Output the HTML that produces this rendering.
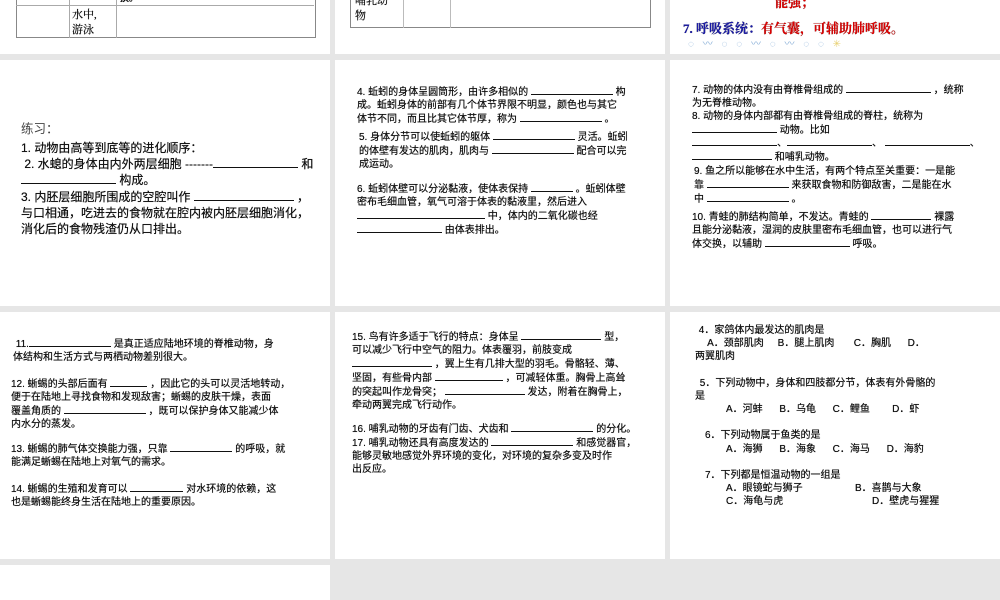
<!DOCTYPE html>
<html><head><meta charset="utf-8"><style>
body{margin:0;width:1000px;height:600px;background:#e6e6e6;position:relative;overflow:hidden;font-family:"Liberation Sans","Noto Sans CJK SC",sans-serif;color:#111}
.p{position:absolute;background:#fff}
.t{position:absolute;white-space:nowrap;font-size:10px;line-height:13px;text-shadow:0 0 0.4px #000}
.u{display:inline-block;border-bottom:1px solid #111;height:9px;vertical-align:baseline}
.b{font-weight:bold}
</style></head><body>
<div class="p" style="left:0;top:0;width:330px;height:54px"></div>
<div class="p" style="left:335px;top:0;width:330px;height:54px"></div>
<div class="p" style="left:670px;top:0;width:330px;height:54px"></div>
<div class="p" style="left:0;top:60px;width:330px;height:246px"></div>
<div class="p" style="left:335px;top:60px;width:330px;height:246px"></div>
<div class="p" style="left:670px;top:60px;width:330px;height:246px"></div>
<div class="p" style="left:0;top:312px;width:330px;height:247px"></div>
<div class="p" style="left:335px;top:312px;width:330px;height:247px"></div>
<div class="p" style="left:670px;top:312px;width:330px;height:247px"></div>
<div class="p" style="left:0;top:565px;width:330px;height:35px"></div>

<!-- top tables -->
<div style="position:absolute;left:16px;top:-1px;width:298px;height:38px;border:1px solid #888;border-top:none"></div>
<div style="position:absolute;left:16px;top:5px;width:298px;border-top:1px solid #aaa"></div>
<div style="position:absolute;left:69px;top:0;height:38px;border-left:1px solid #aaa"></div>
<div style="position:absolute;left:116px;top:0;height:38px;border-left:1px solid #aaa"></div>
<div class="t" style="left:72px;top:8px;font-size:11px;line-height:15px;font-family:'Liberation Serif','Noto Serif CJK SC',serif">水中,<br>游泳</div>
<div class="t" style="left:120px;top:-8px;font-size:9px;font-weight:bold">换。</div>
<div style="position:absolute;left:350px;top:-1px;width:299px;height:28px;border:1px solid #888;border-top:none"></div>
<div style="position:absolute;left:403px;top:0;height:28px;border-left:1px solid #bbb"></div>
<div style="position:absolute;left:450px;top:0;height:28px;border-left:1px solid #bbb"></div>
<div class="t" style="left:355px;top:-6px;font-size:11px;line-height:15px;font-family:'Liberation Serif','Noto Serif CJK SC',serif">哺乳动<br>物</div>
<div class="t b" style="left:775px;top:-4px;font-size:13px;color:#e00000;font-family:'Liberation Serif','Noto Serif CJK SC',serif">能强；</div>
<div class="t b" style="left:683px;top:21px;font-size:13px;line-height:16px;color:#1a1aa8;font-family:'Liberation Serif','Noto Serif CJK SC',serif">7. 呼吸系统：<span style="color:#e00000">有气囊，可辅助肺呼吸。</span></div>
<div class="t" style="left:688px;top:38px;font-size:10px;color:#8ab0d8;letter-spacing:3px;text-shadow:none">◌ 〰 ◌ ◌ 〰 ◌ 〰 ◌ ◌ <span style="color:#e8d070">✳</span></div>

<!-- panel 1 row2 -->
<div class="t" style="left:21px;top:121px;font-size:12.5px;line-height:16px;color:#444;text-shadow:none">练习：</div>
<div class="t" style="left:21px;top:140px;font-size:12px;line-height:16.2px">1. 动物由高等到底等的进化顺序：<br>
&nbsp;2. 水螅的身体由内外两层细胞 -------<span class="u" style="width:85px"></span> 和<br>
<span class="u" style="width:95px"></span> 构成。<br>
3. 内胚层细胞所围成的空腔叫作 <span class="u" style="width:100px"></span> ，<br>
与口相通，吃进去的食物就在腔内被内胚层细胞消化，<br>
消化后的食物残渣仍从口排出。</div>

<!-- panel 2 row2 -->
<div class="t" style="left:357px;top:85px">4. 蚯蚓的身体呈圆筒形，由许多相似的 <span class="u" style="width:82px"></span> 构<br>成。蚯蚓身体的前部有几个体节界限不明显，颜色也与其它<br>体节不同，而且比其它体节厚，称为 <span class="u" style="width:82px"></span> 。</div>
<div class="t" style="left:359px;top:130px">5. 身体分节可以使蚯蚓的躯体 <span class="u" style="width:82px"></span> 灵活。蚯蚓<br>的体壁有发达的肌肉，肌肉与 <span class="u" style="width:82px"></span> 配合可以完<br>成运动。</div>
<div class="t" style="left:357px;top:182px">6. 蚯蚓体壁可以分泌黏液，使体表保持 <span class="u" style="width:42px"></span> 。蚯蚓体壁<br>密布毛细血管，氧气可溶于体表的黏液里，然后进入<br><span class="u" style="width:128px"></span> 中，体内的二氧化碳也经<br><span class="u" style="width:85px"></span> 由体表排出。</div>

<!-- panel 3 row2 -->
<div class="t" style="left:692px;top:83px">7. 动物的体内没有由脊椎骨组成的 <span class="u" style="width:85px"></span> ，统称<br>为无脊椎动物。<br>8. 动物的身体内部都有由脊椎骨组成的脊柱，统称为<br><span class="u" style="width:85px"></span> 动物。比如</div>
<div class="t" style="left:692px;top:136px"><span class="u" style="width:85px"></span>、<span class="u" style="width:85px"></span>、 <span class="u" style="width:85px"></span>、<br><span class="u" style="width:80px"></span> 和哺乳动物。</div>
<div class="t" style="left:694px;top:165px">9. 鱼之所以能够在水中生活，有两个特点至关重要：一是能<br>靠 <span class="u" style="width:82px"></span> 来获取食物和防御敌害，二是能在水<br>中 <span class="u" style="width:82px"></span> 。</div>
<div class="t" style="left:692px;top:210px">10. 青蛙的肺结构简单，不发达。青蛙的 <span class="u" style="width:60px"></span> 裸露<br>且能分泌黏液，湿润的皮肤里密布毛细血管，也可以进行气<br>体交换，以辅助 <span class="u" style="width:85px"></span> 呼吸。</div>

<!-- row3 panel1 -->
<div class="t" style="left:13px;top:337px">&nbsp;11.<span class="u" style="width:82px"></span> 是真正适应陆地环境的脊椎动物，身<br>体结构和生活方式与两栖动物差别很大。</div>
<div class="t" style="left:11px;top:377px">12. 蜥蜴的头部后面有 <span class="u" style="width:37px"></span> ，因此它的头可以灵活地转动，<br>便于在陆地上寻找食物和发现敌害；蜥蜴的皮肤干燥，表面<br>覆盖角质的 <span class="u" style="width:82px"></span> ，既可以保护身体又能减少体<br>内水分的蒸发。</div>
<div class="t" style="left:11px;top:442px">13. 蜥蜴的肺气体交换能力强，只靠 <span class="u" style="width:62px"></span> 的呼吸，就<br>能满足蜥蜴在陆地上对氧气的需求。</div>
<div class="t" style="left:11px;top:482px">14. 蜥蜴的生殖和发育可以 <span class="u" style="width:53px"></span> 对水环境的依赖，这<br>也是蜥蜴能终身生活在陆地上的重要原因。</div>

<!-- row3 panel2 -->
<div class="t" style="left:352px;top:330px">15. 鸟有许多适于飞行的特点：身体呈 <span class="u" style="width:80px"></span> 型，<br>可以减少飞行中空气的阻力。体表覆羽，前肢变成<br><span class="u" style="width:80px"></span> ，翼上生有几排大型的羽毛。骨骼轻、薄、<br>坚固，有些骨内部 <span class="u" style="width:68px"></span> ，可减轻体重。胸骨上高耸<br>的突起叫作龙骨突； <span class="u" style="width:80px"></span> 发达，附着在胸骨上，<br>牵动两翼完成飞行动作。</div>
<div class="t" style="left:352px;top:422px">16. 哺乳动物的牙齿有门齿、犬齿和 <span class="u" style="width:82px"></span> 的分化。<br>17. 哺乳动物还具有高度发达的 <span class="u" style="width:82px"></span> 和感觉器官，<br>能够灵敏地感觉外界环境的变化，对环境的复杂多变及时作<br>出反应。</div>

<!-- row3 panel3 -->
<div class="t" style="left:696px;top:324px">&nbsp;4．家鸽体内最发达的肌肉是<br>&nbsp;&nbsp;&nbsp;&nbsp;A．颈部肌肉&nbsp;&nbsp;&nbsp;&nbsp;&nbsp;B．腿上肌肉&nbsp;&nbsp;&nbsp;&nbsp;&nbsp;&nbsp;&nbsp;C．胸肌&nbsp;&nbsp;&nbsp;&nbsp;&nbsp;&nbsp;D．</div>
<div class="t" style="left:695px;top:350px">两翼肌肉</div>
<div class="t" style="left:697px;top:377px">&nbsp;5．下列动物中，身体和四肢都分节，体表有外骨骼的</div>
<div class="t" style="left:695px;top:390px">是</div>
<div class="t" style="left:726px;top:403px">A．河蚌&nbsp;&nbsp;&nbsp;&nbsp;&nbsp;&nbsp;B．乌龟&nbsp;&nbsp;&nbsp;&nbsp;&nbsp;&nbsp;C．鲤鱼&nbsp;&nbsp;&nbsp;&nbsp;&nbsp;&nbsp;&nbsp;&nbsp;D．虾</div>
<div class="t" style="left:705px;top:429px">6．下列动物属于鱼类的是</div>
<div class="t" style="left:726px;top:443px">A．海狮&nbsp;&nbsp;&nbsp;&nbsp;&nbsp;&nbsp;B．海象&nbsp;&nbsp;&nbsp;&nbsp;&nbsp;&nbsp;C．海马&nbsp;&nbsp;&nbsp;&nbsp;&nbsp;&nbsp;D．海豹</div>
<div class="t" style="left:705px;top:469px">7．下列都是恒温动物的一组是</div>
<div class="t" style="left:726px;top:482px">A．眼镜蛇与狮子</div>
<div class="t" style="left:855px;top:482px">B．喜鹊与大象</div>
<div class="t" style="left:726px;top:495px">C．海龟与虎</div>
<div class="t" style="left:872px;top:495px">D．壁虎与猩猩</div>
</body></html>
